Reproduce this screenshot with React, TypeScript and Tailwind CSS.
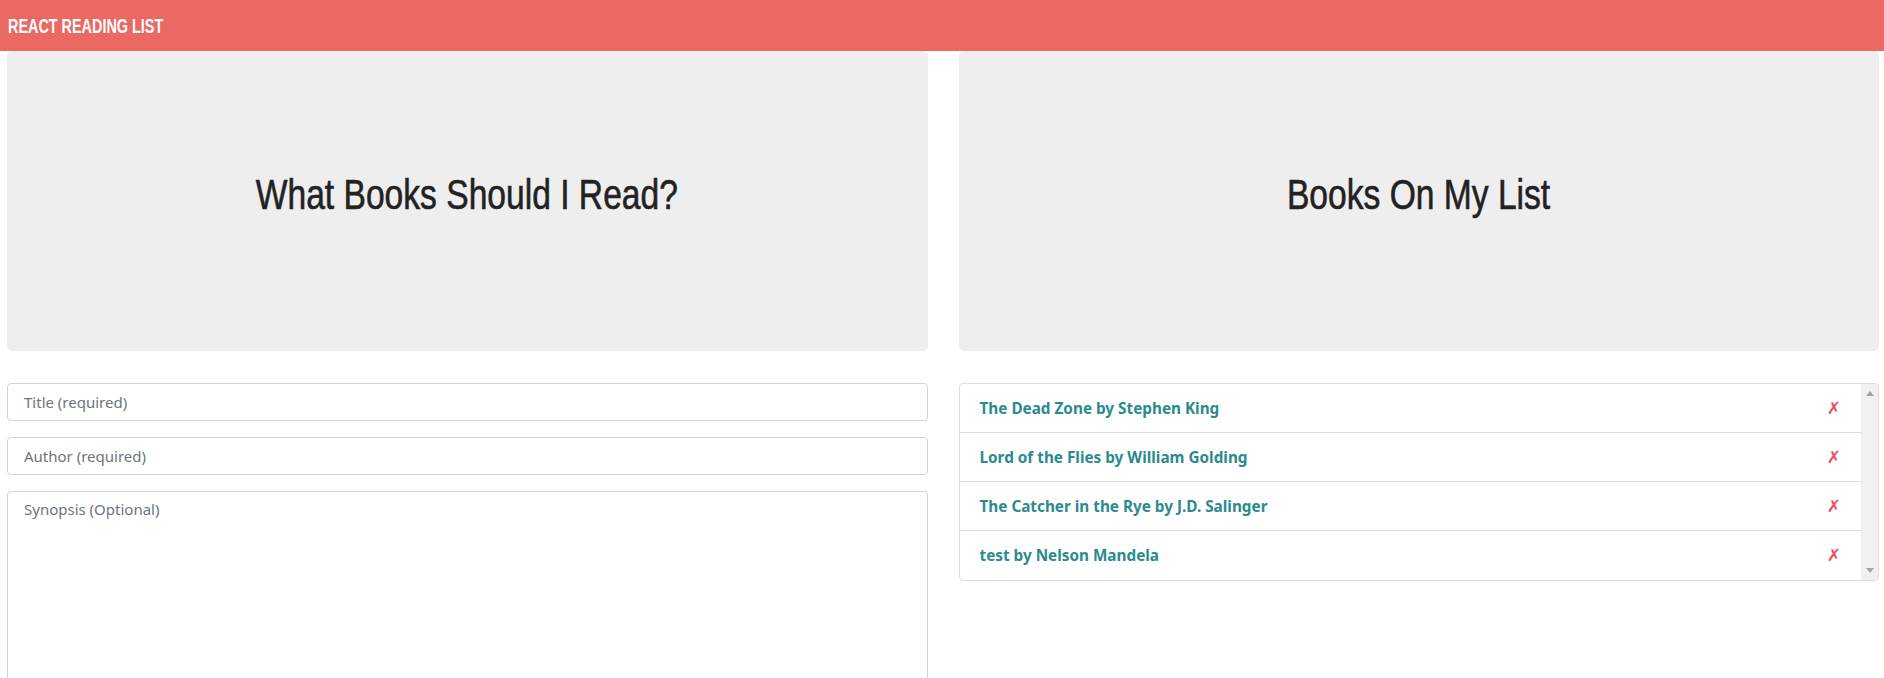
import React from 'react';

const books = [
  { title: 'The Dead Zone', author: 'Stephen King' },
  { title: 'Lord of the Flies', author: 'William Golding' },
  { title: 'The Catcher in the Rye', author: 'J.D. Salinger' },
  { title: 'test', author: 'Nelson Mandela' },
];

// no condensed face installed, so Liberation Sans gets squeezed horizontally
const heading = "inline-block font-['Liberation_Sans',sans-serif] text-[42px] text-[#222222] leading-none scale-x-[0.8] [-webkit-text-stroke:0.6px_#222222]";

export default function App() {
  return (
    <div className="min-h-screen bg-white font-['Noto_Sans',sans-serif]">
      {/* Navbar */}
      <div className="h-[51px] bg-[#ec6863] flex items-center pl-[8px]">
        <span className="inline-block origin-left scale-x-[0.72] font-['Liberation_Sans',sans-serif] text-white text-[20px] font-bold whitespace-nowrap">
          REACT READING LIST
        </span>
      </div>

      <div className="grid grid-cols-2 gap-[31px] pl-[7px] pr-[5px]">
        {/* Left column */}
        <div>
          <div className="h-[300px] bg-[#eeeeee] rounded-[5px] flex items-center justify-center pb-[12px]">
            <h1 className={heading}>What Books Should I Read?</h1>
          </div>
          <div className="mt-[32px] flex flex-col gap-[16px]">
            <input
              className="h-[38px] w-full border border-[#ced4da] rounded-[4px] px-[16px] text-[15px] placeholder:text-[#6c757d] outline-none"
              placeholder="Title (required)"
            />
            <input
              className="h-[38px] w-full border border-[#ced4da] rounded-[4px] px-[16px] text-[15px] placeholder:text-[#6c757d] outline-none"
              placeholder="Author (required)"
            />
            <textarea
              className="h-[240px] w-full border border-[#ced4da] rounded-[4px] px-[16px] pt-[6px] text-[15px] placeholder:text-[#6c757d] outline-none resize-none"
              placeholder="Synopsis (Optional)"
            />
          </div>
        </div>

        {/* Right column */}
        <div>
          <div className="h-[300px] bg-[#eeeeee] rounded-[5px] flex items-center justify-center pb-[12px]">
            <h1 className={heading}>Books On My List</h1>
          </div>
          <div className="mt-[32px] flex border border-[#dddddd] rounded-[4px] overflow-hidden">
            <ul className="flex-1">
              {books.map((b, i) => (
                <li
                  key={i}
                  className={`h-[49px] flex items-center justify-between pl-[20px] pr-[20px] ${i < books.length - 1 ? 'border-b border-[#dddddd]' : ''}`}
                >
                  <span className="text-[#2b8a8e] font-bold text-[15.3px]">
                    {b.title} by {b.author}
                  </span>
                  <span className="text-[#ee4a63] text-[17px] leading-none font-['DejaVu_Sans',sans-serif]">✗</span>
                </li>
              ))}
            </ul>
            {/* Scrollbar */}
            <div className="w-[17px] bg-[#f0f0f0] flex flex-col justify-between items-center py-[7px]">
              <svg width="8" height="5" viewBox="0 0 8 5"><path d="M0 5 L4 0 L8 5 Z" fill="#a3a3a3" /></svg>
              <svg width="8" height="5" viewBox="0 0 8 5"><path d="M0 0 L4 5 L8 0 Z" fill="#a3a3a3" /></svg>
            </div>
          </div>
        </div>
      </div>
    </div>
  );
}
